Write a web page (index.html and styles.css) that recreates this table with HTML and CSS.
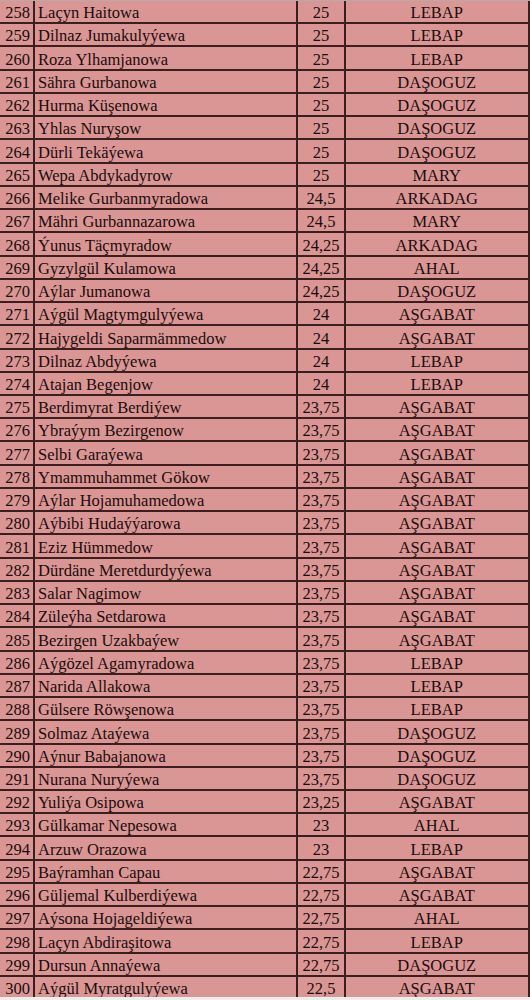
FILE: index.html
```html
<!DOCTYPE html>
<html lang="tk">
<head>
<meta charset="utf-8">
<title>Netijeler</title>
<link rel="stylesheet" href="styles.css">
</head>
<body>
<div class="page">
<div class="sheet">
<div class="row"><div class="cell num">258</div><div class="cell name">Laçyn Haitowa</div><div class="cell score">25</div><div class="cell region">LEBAP</div></div>
<div class="row"><div class="cell num">259</div><div class="cell name">Dilnaz Jumakulyýewa</div><div class="cell score">25</div><div class="cell region">LEBAP</div></div>
<div class="row"><div class="cell num">260</div><div class="cell name">Roza Ylhamjanowa</div><div class="cell score">25</div><div class="cell region">LEBAP</div></div>
<div class="row"><div class="cell num">261</div><div class="cell name">Sähra Gurbanowa</div><div class="cell score">25</div><div class="cell region">DAŞOGUZ</div></div>
<div class="row"><div class="cell num">262</div><div class="cell name">Hurma Küşenowa</div><div class="cell score">25</div><div class="cell region">DAŞOGUZ</div></div>
<div class="row"><div class="cell num">263</div><div class="cell name">Yhlas Nuryşow</div><div class="cell score">25</div><div class="cell region">DAŞOGUZ</div></div>
<div class="row"><div class="cell num">264</div><div class="cell name">Dürli Tekäýewa</div><div class="cell score">25</div><div class="cell region">DAŞOGUZ</div></div>
<div class="row"><div class="cell num">265</div><div class="cell name">Wepa Abdykadyrow</div><div class="cell score">25</div><div class="cell region">MARY</div></div>
<div class="row"><div class="cell num">266</div><div class="cell name">Melike Gurbanmyradowa</div><div class="cell score">24,5</div><div class="cell region">ARKADAG</div></div>
<div class="row"><div class="cell num">267</div><div class="cell name">Mähri Gurbannazarowa</div><div class="cell score">24,5</div><div class="cell region">MARY</div></div>
<div class="row"><div class="cell num">268</div><div class="cell name">Ýunus Täçmyradow</div><div class="cell score">24,25</div><div class="cell region">ARKADAG</div></div>
<div class="row"><div class="cell num">269</div><div class="cell name">Gyzylgül Kulamowa</div><div class="cell score">24,25</div><div class="cell region">AHAL</div></div>
<div class="row"><div class="cell num">270</div><div class="cell name">Aýlar Jumanowa</div><div class="cell score">24,25</div><div class="cell region">DAŞOGUZ</div></div>
<div class="row"><div class="cell num">271</div><div class="cell name">Aýgül Magtymgulyýewa</div><div class="cell score">24</div><div class="cell region">AŞGABAT</div></div>
<div class="row"><div class="cell num">272</div><div class="cell name">Hajygeldi Saparmämmedow</div><div class="cell score">24</div><div class="cell region">AŞGABAT</div></div>
<div class="row"><div class="cell num">273</div><div class="cell name">Dilnaz Abdyýewa</div><div class="cell score">24</div><div class="cell region">LEBAP</div></div>
<div class="row"><div class="cell num">274</div><div class="cell name">Atajan Begenjow</div><div class="cell score">24</div><div class="cell region">LEBAP</div></div>
<div class="row"><div class="cell num">275</div><div class="cell name">Berdimyrat Berdiýew</div><div class="cell score">23,75</div><div class="cell region">AŞGABAT</div></div>
<div class="row"><div class="cell num">276</div><div class="cell name">Ybraýym Bezirgenow</div><div class="cell score">23,75</div><div class="cell region">AŞGABAT</div></div>
<div class="row"><div class="cell num">277</div><div class="cell name">Selbi Garaýewa</div><div class="cell score">23,75</div><div class="cell region">AŞGABAT</div></div>
<div class="row"><div class="cell num">278</div><div class="cell name">Ymammuhammet Gökow</div><div class="cell score">23,75</div><div class="cell region">AŞGABAT</div></div>
<div class="row"><div class="cell num">279</div><div class="cell name">Aýlar Hojamuhamedowa</div><div class="cell score">23,75</div><div class="cell region">AŞGABAT</div></div>
<div class="row"><div class="cell num">280</div><div class="cell name">Aýbibi Hudaýýarowa</div><div class="cell score">23,75</div><div class="cell region">AŞGABAT</div></div>
<div class="row"><div class="cell num">281</div><div class="cell name">Eziz Hümmedow</div><div class="cell score">23,75</div><div class="cell region">AŞGABAT</div></div>
<div class="row"><div class="cell num">282</div><div class="cell name">Dürdäne Meretdurdyýewa</div><div class="cell score">23,75</div><div class="cell region">AŞGABAT</div></div>
<div class="row"><div class="cell num">283</div><div class="cell name">Salar Nagimow</div><div class="cell score">23,75</div><div class="cell region">AŞGABAT</div></div>
<div class="row"><div class="cell num">284</div><div class="cell name">Züleýha Setdarowa</div><div class="cell score">23,75</div><div class="cell region">AŞGABAT</div></div>
<div class="row"><div class="cell num">285</div><div class="cell name">Bezirgen Uzakbaýew</div><div class="cell score">23,75</div><div class="cell region">AŞGABAT</div></div>
<div class="row"><div class="cell num">286</div><div class="cell name">Aýgözel Agamyradowa</div><div class="cell score">23,75</div><div class="cell region">LEBAP</div></div>
<div class="row"><div class="cell num">287</div><div class="cell name">Narida Allakowa</div><div class="cell score">23,75</div><div class="cell region">LEBAP</div></div>
<div class="row"><div class="cell num">288</div><div class="cell name">Gülsere Röwşenowa</div><div class="cell score">23,75</div><div class="cell region">LEBAP</div></div>
<div class="row"><div class="cell num">289</div><div class="cell name">Solmaz Ataýewa</div><div class="cell score">23,75</div><div class="cell region">DAŞOGUZ</div></div>
<div class="row"><div class="cell num">290</div><div class="cell name">Aýnur Babajanowa</div><div class="cell score">23,75</div><div class="cell region">DAŞOGUZ</div></div>
<div class="row"><div class="cell num">291</div><div class="cell name">Nurana Nuryýewa</div><div class="cell score">23,75</div><div class="cell region">DAŞOGUZ</div></div>
<div class="row"><div class="cell num">292</div><div class="cell name">Yuliýa Osipowa</div><div class="cell score">23,25</div><div class="cell region">AŞGABAT</div></div>
<div class="row"><div class="cell num">293</div><div class="cell name">Gülkamar Nepesowa</div><div class="cell score">23</div><div class="cell region">AHAL</div></div>
<div class="row"><div class="cell num">294</div><div class="cell name">Arzuw Orazowa</div><div class="cell score">23</div><div class="cell region">LEBAP</div></div>
<div class="row"><div class="cell num">295</div><div class="cell name">Baýramhan Capau</div><div class="cell score">22,75</div><div class="cell region">AŞGABAT</div></div>
<div class="row"><div class="cell num">296</div><div class="cell name">Güljemal Kulberdiýewa</div><div class="cell score">22,75</div><div class="cell region">AŞGABAT</div></div>
<div class="row"><div class="cell num">297</div><div class="cell name">Aýsona Hojageldiýewa</div><div class="cell score">22,75</div><div class="cell region">AHAL</div></div>
<div class="row"><div class="cell num">298</div><div class="cell name">Laçyn Abdiraşitowa</div><div class="cell score">22,75</div><div class="cell region">LEBAP</div></div>
<div class="row"><div class="cell num">299</div><div class="cell name">Dursun Annaýewa</div><div class="cell score">22,75</div><div class="cell region">DAŞOGUZ</div></div>
<div class="row"><div class="cell num">300</div><div class="cell name">Aýgül Myratgulyýewa</div><div class="cell score">22,5</div><div class="cell region">AŞGABAT</div></div>
</div>
</div>
</body>
</html>
```
FILE: styles.css
```css
html, body {
  margin: 0;
  padding: 0;
  background: #eeeeee;
}

.page {
  width: 530px;
  height: 997px;
  overflow: hidden;
  border-top: 1px solid #b9a9a9;
  box-sizing: border-box;
}

.sheet {
  display: flex;
  flex-direction: column;
  font-family: "Liberation Serif", "Times New Roman", serif;
  font-size: 16.5px;
  color: #1a0c0c;
}

.row {
  display: grid;
  grid-template-columns: 35px 263px 48px 183.5px;
  height: 23.24px;
  flex: none;
}

.cell {
  display: flex;
  align-items: flex-end;
  box-sizing: border-box;
  background: #da9694;
  border-right: 2px solid #3b1e1e;
  border-bottom: 2px solid #3b1e1e;
  line-height: 16px;
  padding-bottom: 1px;
  white-space: nowrap;
  overflow: hidden;
}

.num {
  justify-content: flex-end;
  padding-right: 3px;
}

.name {
  padding-left: 3px;
}

.score,
.region {
  justify-content: center;
}
```
